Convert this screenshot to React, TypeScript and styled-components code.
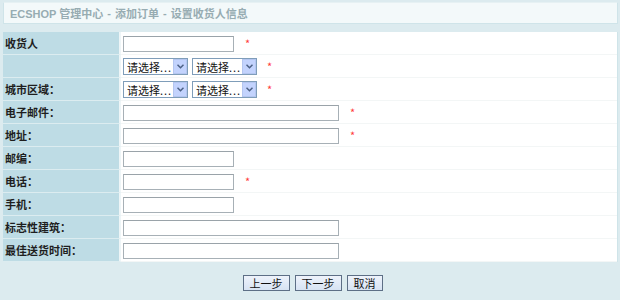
import React from "react";
import styled, { createGlobalStyle } from "styled-components";

const GlobalStyle = createGlobalStyle`
  html, body {
    margin: 0;
    padding: 0;
    background: #dcebef;
  }
  body {
    font-family: "Noto Sans CJK SC", "DejaVu Sans", sans-serif;
    font-size: 11px;
    color: #222;
  }
`;

const Page = styled.div`
  width: 620px;
  height: 300px;
  padding: 2px 2px 0 3px;
  box-sizing: border-box;
`;

const TitleBar = styled.h1`
  margin: 0;
  height: 22px;
  box-sizing: border-box;
  padding: 0 0 0 6px;
  display: flex;
  align-items: center;
  background: #f3f9fa;
  border: 1px solid #cfe4e9;
  border-top-color: #e6f1f3;
  font-family: "Liberation Sans", "Noto Sans CJK SC", sans-serif;
  font-size: 11px;
  font-weight: bold;
  color: #97acb2;
`;

const Sep = styled.span`
  margin: 0 4px;
`;

const Table = styled.table`
  margin-top: 8px;
  width: 615px;
  border-collapse: separate;
  border-spacing: 0;
  background: #fff;
  border-right: 1px solid #cfe4e9;
`;

const Label = styled.td`
  width: 114px;
  height: 22px;
  padding: 0 0 0 2px;
  background: #bedce5;
  border-bottom: 1px solid #dcecf0;
  border-right: 2px solid #eef5f7;
  font-weight: bold;
  font-size: 11px;
  color: #1e1e1e;
  white-space: nowrap;
`;

const Value = styled.td`
  height: 22px;
  padding: 0 0 0 2px;
  border-bottom: 1px solid #f3f6f6;
  white-space: nowrap;
`;

const Input = styled.input<{ $wide?: boolean }>`
  box-sizing: border-box;
  width: ${({ $wide }) => ($wide ? "216px" : "111px")};
  height: 16px;
  margin: 0;
  padding: 0 2px;
  border: 1px solid #a7b0b6;
  border-top-color: #9aa3a9;
  background: #fff;
  vertical-align: middle;
  font-size: 11px;
`;

const Star = styled.span<{ $gap: number }>`
  display: inline-block;
  margin-left: ${({ $gap }) => $gap}px;
  color: #ff3b3b;
  font-size: 11px;
  vertical-align: -1px;
`;

const SelectBox = styled.span`
  display: inline-flex;
  align-items: center;
  box-sizing: border-box;
  width: 65px;
  height: 17px;
  margin-right: 4px;
  border: 1px solid #7f9db9;
  background: #fff;
  vertical-align: middle;
`;

const SelectText = styled.span`
  flex: 1;
  overflow: hidden;
  padding-left: 3px;
  font-size: 11px;
  color: #111;
`;

const Dots = styled.span`
  letter-spacing: 1px;
`;

const Arrow = styled.span`
  flex: none;
  width: 14px;
  height: 15px;
  background: #c3d3fd;
  border: 1px solid #b4c6f0;
  box-sizing: border-box;
  display: flex;
  align-items: center;
  justify-content: center;
`;

const Buttons = styled.div`
  display: flex;
  justify-content: center;
  gap: 5px;
  margin-top: 13px;
  padding-left: 4px;
`;

const Button = styled.button`
  height: 16px;
  padding: 0 6px;
  box-sizing: border-box;
  border: 1px solid #5d6f86;
  background: linear-gradient(#eef3fb, #d7e3f3);
  font-family: "Noto Sans CJK SC", sans-serif;
  font-size: 11px;
  line-height: 12px;
  color: #111;
`;

const Select = () => (
  <SelectBox>
    <SelectText>
      请选择<Dots>...</Dots>
    </SelectText>
    <Arrow>
      <svg width="7" height="5" viewBox="0 0 7 5">
        <path d="M0.5 0.8 L3.5 3.8 L6.5 0.8" fill="none" stroke="#4d6185" strokeWidth="1.5" />
      </svg>
    </Arrow>
  </SelectBox>
);

type Row = { label: string; kind: "short" | "wide" | "select"; required?: boolean };

const rows: Row[] = [
  { label: "收货人", kind: "short", required: true },
  { label: "", kind: "select", required: true },
  { label: "城市区域：", kind: "select", required: true },
  { label: "电子邮件：", kind: "wide", required: true },
  { label: "地址：", kind: "wide", required: true },
  { label: "邮编：", kind: "short" },
  { label: "电话：", kind: "short", required: true },
  { label: "手机：", kind: "short" },
  { label: "标志性建筑：", kind: "wide" },
  { label: "最佳送货时间：", kind: "wide" },
];

export default function App() {
  return (
    <>
      <GlobalStyle />
      <Page>
        <TitleBar>
          ECSHOP 管理中心<Sep>-</Sep>添加订单<Sep>-</Sep>设置收货人信息
        </TitleBar>
        <Table>
          <tbody>
            {rows.map((r, i) => (
              <tr key={i}>
                <Label>{r.label}</Label>
                <Value>
                  {r.kind === "select" ? (
                    <>
                      <Select />
                      <Select />
                    </>
                  ) : (
                    <Input $wide={r.kind === "wide"} />
                  )}
                  {r.required && <Star $gap={r.kind === "select" ? 6 : 11}>*</Star>}
                </Value>
              </tr>
            ))}
          </tbody>
        </Table>
        <Buttons>
          <Button>上一步</Button>
          <Button>下一步</Button>
          <Button>取消</Button>
        </Buttons>
      </Page>
    </>
  );
}
